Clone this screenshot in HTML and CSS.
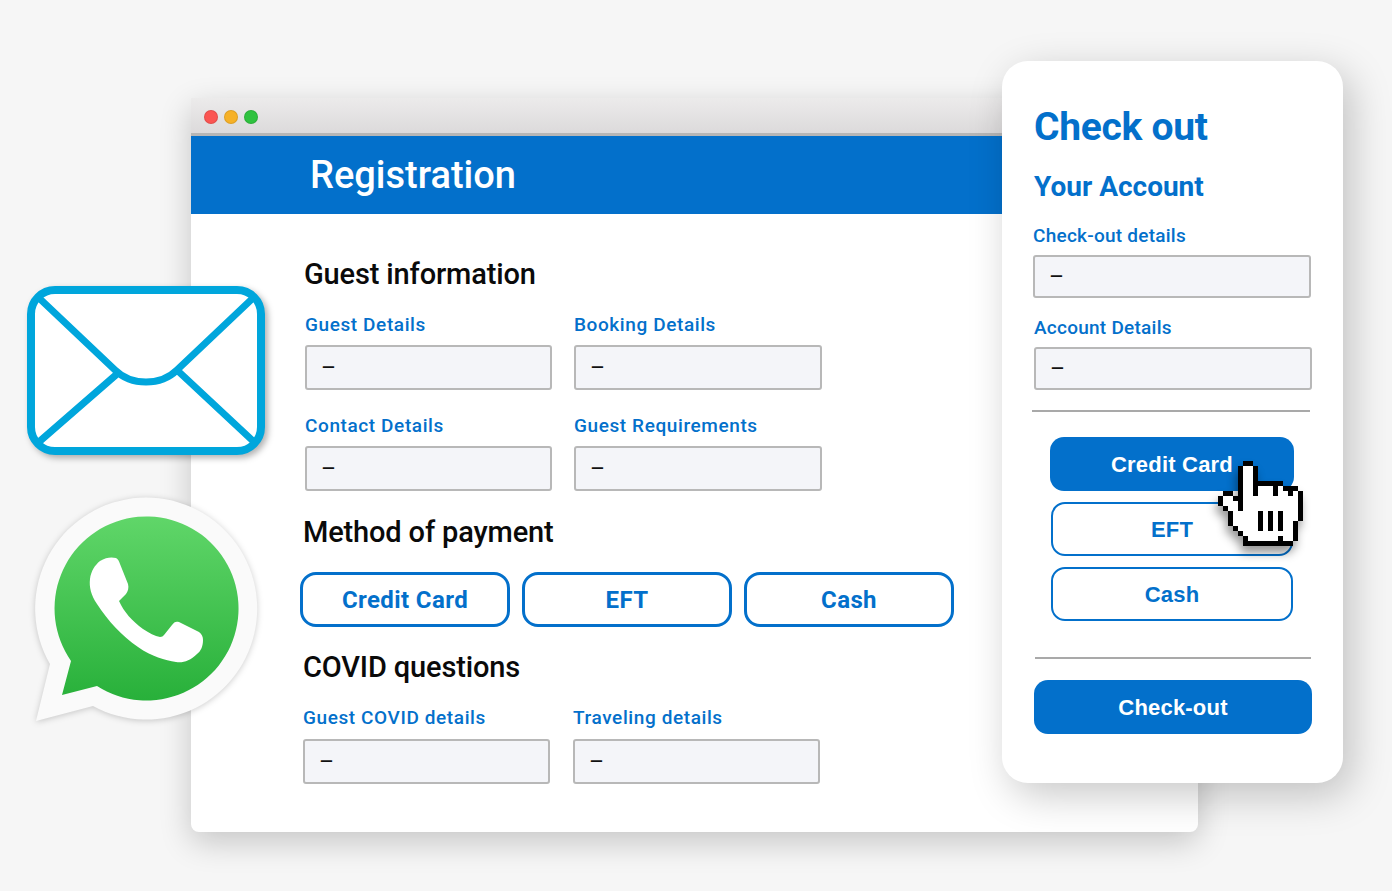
FILE: index.html
```html
<!DOCTYPE html>
<html lang="en">
<head>
  <meta charset="UTF-8">
  <meta name="viewport" content="width=device-width, initial-scale=1.0">
  <title>Registration and check out</title>
  <link rel="stylesheet" href="styles.css">
</head>
<body>
  <div class="canvas">

    <div class="window">
      <div class="titlebar">
        <span class="dot dot-red"></span>
        <span class="dot dot-yellow"></span>
        <span class="dot dot-green"></span>
      </div>
      <div class="banner">Registration</div>
      <div class="form">
        <section class="guest">
          <h2>Guest information</h2>
          <div class="fields">
            <div class="field"><label>Guest Details</label><div class="input">–</div></div>
            <div class="field"><label>Booking Details</label><div class="input">–</div></div>
            <div class="field"><label>Contact Details</label><div class="input">–</div></div>
            <div class="field"><label>Guest Requirements</label><div class="input">–</div></div>
          </div>
        </section>
        <section class="payment">
          <h2>Method of payment</h2>
          <div class="pay-options">
            <button class="outline-btn">Credit Card</button>
            <button class="outline-btn">EFT</button>
            <button class="outline-btn">Cash</button>
          </div>
        </section>
        <section class="covid">
          <h2>COVID questions</h2>
          <div class="fields">
            <div class="field"><label>Guest COVID details</label><div class="input">–</div></div>
            <div class="field"><label>Traveling details</label><div class="input">–</div></div>
          </div>
        </section>
      </div>
    </div>

    <svg class="envelope" viewBox="0 0 238 169">
      <rect x="4" y="4" width="230" height="161" rx="24" fill="#fff" stroke="#00a6dc" stroke-width="8"/>
      <path d="M12 12L88 84C104 100 134 100 150 84L226 12M13 155L90 88M226 155L151 85" fill="none" stroke="#00a6dc" stroke-width="7"/>
    </svg>

    <svg class="whatsapp" viewBox="30 490 235 240">
      <defs>
        <linearGradient id="wa-green" x1="0" y1="0" x2="0" y2="1">
          <stop offset="0" stop-color="#60d669"/>
          <stop offset="1" stop-color="#28b03a"/>
        </linearGradient>
      </defs>
      <path d="M36 720L50 663A111 111 0 1 1 93 705Z" fill="#fafafa"/>
      <path d="M62 694L71 660A92 92 0 1 1 97 685Z" fill="url(#wa-green)"/>
      <path d="M100 560C106 556 112 556 116 557C118 558 119 560 120 563L128 583C129 587 128 590 126 593L119 600C124 611 132 620 143 628C149 632 155 635 160 636C162 636 163 635 164 634L172 624C174 621 176 620 179 621L199 631C202 633 203 636 203 639C203 645 201 650 197 653C190 660 183 662 176 661C165 659 152 656 138 646C122 635 108 620 97 603C91 594 89 586 90 578C91 570 95 564 100 560Z" fill="#fff"/>
    </svg>

    <div class="checkout">
      <h1>Check out</h1>
      <h3>Your Account</h3>
      <div class="field field-one"><label>Check-out details</label><div class="input">–</div></div>
      <div class="field field-two"><label>Account Details</label><div class="input">–</div></div>
      <hr class="rule-top">
      <div class="checkout-options">
        <button class="fill-btn">Credit Card</button>
        <button class="outline-btn">EFT</button>
        <button class="outline-btn">Cash</button>
      </div>
      <hr class="rule-bottom">
      <button class="fill-btn checkout-btn">Check-out</button>
    </div>

    <svg class="cursor" viewBox="0 0 17 17" shape-rendering="crispEdges">
      <path d="M4 1H7V7H8V5H16V12H15V16H5V15H4V14H3V13H2V10H1V9H0V7H1V6H3V7H4Z" fill="#fff"/>
      <path d="M5 0h2v1h-2zM4 1h1v9h-1zM7 1h1v6h-1zM8 4h5v1h-5zM11 5h1v2h-1zM13 5h3v1h-3zM14 6h1v1h-1zM16 6h1v6h-1zM1 6h2v1h-2zM0 7h1v2h-1zM3 7h1v1h-1zM1 9h1v1h-1zM2 10h1v3h-1zM3 13h1v1h-1zM4 14h1v1h-1zM5 15h1v2h-1zM6 16h6v1h-6zM12 15h1v1h-1zM12 16h3v1h-3zM15 12h1v4h-1zM8 10h1v4h-1zM10 10h1v4h-1zM12 10h1v4h-1z" fill="#000"/>
    </svg>

  </div>
</body>
</html>
```

FILE: styles.css
```css
body {
  margin: 0;
  background-color: #f6f6f6;
  font-family: Roboto, "Liberation Sans", sans-serif;
}
.canvas {
  position: relative;
  width: 1392px;
  height: 891px;
  overflow: hidden;
}

/* windows on the canvas */
.window {
  position: absolute;
  left: 191px;
  top: 98px;
  width: 1007px;
  height: 734px;
  background: #fff;
  border-radius: 0 0 8px 8px;
  box-shadow: 0 10px 32px rgba(0,0,0,0.2);
}
.titlebar {
  display: flex;
  align-items: center;
  gap: 6px;
  height: 38px;
  padding: 3px 0 0 13px;
  box-sizing: border-box;
  background: linear-gradient(#ecebeb, #dcdadb);
  border-bottom: 3px solid #b6b6b6;
}
.dot {
  width: 14px;
  height: 14px;
  box-sizing: border-box;
  border-radius: 50%;
  border: 1px solid rgba(0,0,0,0.1);
}
.dot-red { background-color: #fb5552; }
.dot-yellow { background-color: #f6b127; }
.dot-green { background-color: #2fc23f; }
.banner {
  height: 78px;
  padding-left: 119px;
  background-color: #0370cb;
  color: #fff;
  font-size: 38px;
  font-weight: 500;
  line-height: 78px;
}
.form {
  padding: 44px 0 0 114px;
}
h2 {
  margin: 0;
  font-size: 29px;
  font-weight: 500;
  line-height: 32px;
  color: #0a0a0a;
  letter-spacing: -0.15px;
}
.guest h2 {
  margin-left: -1px;
}
.fields {
  display: grid;
  grid-template-columns: 247px 247px;
  column-gap: 22px;
  row-gap: 25px;
  margin-top: 24px;
}
.guest .fields {
  grid-template-columns: 247px 248px;
}
.field label {
  display: block;
  font-size: 19px;
  font-weight: 500;
  line-height: 22px;
  letter-spacing: 0.6px;
  color: #0370cb;
  margin-bottom: 9px;
}
.input {
  height: 45px;
  box-sizing: border-box;
  padding-left: 14px;
  background-color: #f4f5f9;
  border: 2px solid #b8b8b8;
  border-radius: 3px;
  font-size: 23px;
  line-height: 44px;
  color: #111;
}
.payment {
  margin: 25px 0 0 -2px;
}
.pay-options {
  display: flex;
  gap: 12px;
  margin: 24px 0 0 -3px;
}
.outline-btn {
  background: #fff;
  border: 3px solid #0370cb;
  border-radius: 16px;
  color: #0370cb;
  font-family: inherit;
  font-size: 24px;
  font-weight: 700;
  letter-spacing: 0.4px;
  padding: 0;
}
.pay-options .outline-btn {
  width: 210px;
  height: 55px;
  padding-top: 1px;
}
.covid {
  margin: 24px 0 0 -2px;
}
.covid .fields {
  column-gap: 23px;
}
.covid label {
  margin-bottom: 10px;
}

/* check out panel */
.checkout {
  position: absolute;
  left: 1002px;
  top: 61px;
  width: 341px;
  height: 722px;
  box-sizing: border-box;
  padding: 42px 31px 0 32px;
  background: #fff;
  border-radius: 26px;
  box-shadow: 8px 12px 40px rgba(0,0,0,0.22);
}
.checkout h1 {
  margin: 0;
  font-size: 39px;
  font-weight: 700;
  line-height: 48px;
  color: #0370cb;
  letter-spacing: -0.3px;
}
.checkout h3 {
  margin: 20px 0 0 0;
  font-size: 28px;
  font-weight: 700;
  line-height: 32px;
  color: #0370cb;
}
.checkout label {
  letter-spacing: 0.25px;
  margin-bottom: 8px;
}
.checkout .field-one {
  margin: 22px 0 0 -1px;
  width: 278px;
}
.checkout .field-two {
  margin: 19px 0 0 0;
  width: 278px;
}
.checkout .input {
  height: 43px;
  line-height: 41px;
}
hr {
  height: 2px;
  border: none;
  background-color: #a9a9a9;
  margin: 0;
}
.rule-top {
  width: 278px;
  margin: 20px 0 0 -2px;
}
.rule-bottom {
  width: 276px;
  margin: 36px 0 0 1px;
}
.checkout-options {
  display: flex;
  flex-direction: column;
  align-items: center;
  gap: 11px;
  margin: 25px 0 0 16px;
  width: 244px;
}
.checkout-options button {
  width: 242px;
  height: 54px;
  padding-top: 2px;
}
.checkout-options .fill-btn {
  width: 244px;
}
.fill-btn {
  background-color: #0370cb;
  border: none;
  border-radius: 14px;
  color: #fff;
  font-family: "Liberation Sans", Arial, sans-serif;
  font-size: 22px;
  font-weight: 700;
  letter-spacing: 0.2px;
  padding: 2px 0 0;
}
.checkout-options .outline-btn {
  font-family: "Liberation Sans", Arial, sans-serif;
  font-size: 22px;
  letter-spacing: 0.2px;
  border-width: 2.5px;
  border-radius: 14px;
}
.checkout-btn {
  display: block;
  width: 278px;
  height: 54px;
  margin: 21px 0 0 0;
}

/* loose icons */
.envelope {
  position: absolute;
  left: 27px;
  top: 286px;
  width: 238px;
  height: 169px;
  filter: drop-shadow(3px 3px 3px rgba(0,0,0,0.3));
}
.whatsapp {
  position: absolute;
  left: 30px;
  top: 491px;
  width: 235px;
  height: 240px;
  filter: drop-shadow(0 1px 3px rgba(0,0,0,0.2));
}
.cursor {
  position: absolute;
  left: 1218px;
  top: 461px;
  width: 85px;
  height: 85px;
  filter: drop-shadow(-2px 7px 5px rgba(0,0,0,0.4));
}
```
